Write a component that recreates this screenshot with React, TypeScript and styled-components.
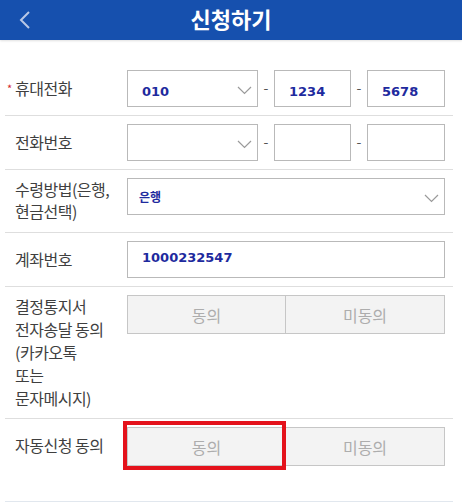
import styled, { createGlobalStyle } from 'styled-components';

const GlobalStyle = createGlobalStyle`
  body {
    margin: 0;
    background: #fff;
    font-family: "Noto Sans CJK KR", "Noto Sans", sans-serif;
  }
`

const Chevron = () => (
    <ChevronIcon width="15" height="9" viewBox="0 0 15 9">
        <path d="M1 1 L7.5 7.5 L14 1" fill="none" stroke="#9a9a9a" strokeWidth="1.2" />
    </ChevronIcon>
)

export default () => {
    return (
        <Page>
            <GlobalStyle />
            <Header>
                <Back>
                    <svg width="14" height="20" viewBox="0 0 14 20">
                        <path d="M11 2 L3 10 L11 18" fill="none" stroke="#b9c8e6" strokeWidth="2" />
                    </svg>
                </Back>
                <Title>신청하기</Title>
            </Header>
            <Form>
                <Row>
                    <Label required>휴대전화</Label>
                    <Fields>
                        <Select width={131}>
                            <Value>010</Value>
                            <Chevron />
                        </Select>
                        <Dash>-</Dash>
                        <Input width={77}><Value>1234</Value></Input>
                        <Dash>-</Dash>
                        <Input width={78}><Value>5678</Value></Input>
                    </Fields>
                </Row>
                <Row>
                    <Label>전화번호</Label>
                    <Fields>
                        <Select width={131}>
                            <Value />
                            <Chevron />
                        </Select>
                        <Dash>-</Dash>
                        <Input width={77} />
                        <Dash>-</Dash>
                        <Input width={78} />
                    </Fields>
                </Row>
                <Row>
                    <Label lh={22} pad="0 0 2px">수령방법(은행,<br />현금선택)</Label>
                    <Fields>
                        <Select width={318}>
                            <Value small>은행</Value>
                            <Chevron />
                        </Select>
                    </Fields>
                </Row>
                <Row>
                    <Label>계좌번호</Label>
                    <Fields>
                        <Input width={318}><Value raised>1000232547</Value></Input>
                    </Fields>
                </Row>
                <Row>
                    <Label pad="0">결정통지서<br />전자송달 동의<br />(카카오톡<br />또는<br />문자메시지)</Label>
                    <Fields>
                        <Choice>동의</Choice>
                        <Choice>미동의</Choice>
                    </Fields>
                </Row>
                <Row last>
                    <Label>자동신청 동의</Label>
                    <Fields>
                        <Choice highlighted>동의</Choice>
                        <Choice>미동의</Choice>
                    </Fields>
                </Row>
            </Form>
        </Page>
    )
}

const Page = styled.div`
  width: 462px;
  min-height: 503px;
  background: #fff;
`

const Header = styled.div`
  position: relative;
  height: 40px;
  background: #1650ae;
  display: flex;
  align-items: center;
  justify-content: center;
  box-shadow: 0 1px 2px rgba(0, 0, 0, 0.12);
`

const Back = styled.div`
  position: absolute;
  left: 18px;
  top: 10px;
`

const Title = styled.div`
  color: #fff;
  font-size: 22px;
  font-weight: 700;
  line-height: 1;
  margin-top: -4px;
`

const Form = styled.div`
  margin: 22px 9px 0 5px;
`

const Row = styled.div<{ last?: boolean }>`
  display: flex;
  align-items: flex-start;
  padding: 8px 0 ${p => p.last ? '35px' : '8px'} 10px;
  border-bottom: 1px solid ${p => p.last ? '#e1e7ee' : '#dedede'};
`

const Label = styled.div<{ required?: boolean; lh?: number; pad?: string }>`
  position: relative;
  width: 112px;
  flex-shrink: 0;
  padding: ${p => p.pad ?? '7px 0 0'};
  font-size: 16px;
  line-height: ${p => p.lh ?? 23}px;
  color: #3f3f3f;
  letter-spacing: -0.5px;

  &::before {
    content: ${p => p.required ? '"*"' : 'none'};
    position: absolute;
    left: -8px;
    top: 13px;
    line-height: 11px;
    color: #d2262e;
    font-size: 11px;
  }
`

const Fields = styled.div`
  display: flex;
  align-items: center;
`

const Box = styled.div<{ width: number }>`
  box-sizing: border-box;
  width: ${p => p.width}px;
  height: 37px;
  border: 1px solid #b9b9b9;
  background: #fff;
  display: flex;
  align-items: center;
  padding: 0 5px 0 14px;
`

const Input = styled(Box)``

const Select = styled(Box)`
  justify-content: space-between;
`

const ChevronIcon = styled.svg`
  margin-top: 3px;
`

const Value = styled.span<{ small?: boolean; raised?: boolean }>`
  font-family: ${p => p.small ? '"Noto Sans CJK KR", sans-serif' : '"DejaVu Sans", sans-serif'};
  font-size: ${p => p.small ? '12px' : '13px'};
  font-weight: 700;
  color: #1e2a9e;
  margin-top: ${p => p.small ? '0' : p.raised ? '-4px' : '6px'};
  margin-left: ${p => p.small ? '-3px' : '0'};
`

const Dash = styled.span`
  width: 16px;
  text-align: center;
  font-size: 14px;
  color: #555;
  margin-top: -3px;
`

const Choice = styled.div<{ highlighted?: boolean }>`
  position: relative;
  box-sizing: border-box;
  width: 159px;
  height: 39px;
  background: #f3f3f3;
  border: 1px solid #c6c6c6;
  display: flex;
  align-items: center;
  justify-content: center;
  font-size: 16px;
  color: #adadad;

  & + & {
    border-left: none;
  }

  &::after {
    content: ${p => p.highlighted ? '""' : 'none'};
    position: absolute;
    top: -7px;
    left: -5px;
    right: -1px;
    bottom: -5px;
    border: 4px solid #e4121b;
  }
`
